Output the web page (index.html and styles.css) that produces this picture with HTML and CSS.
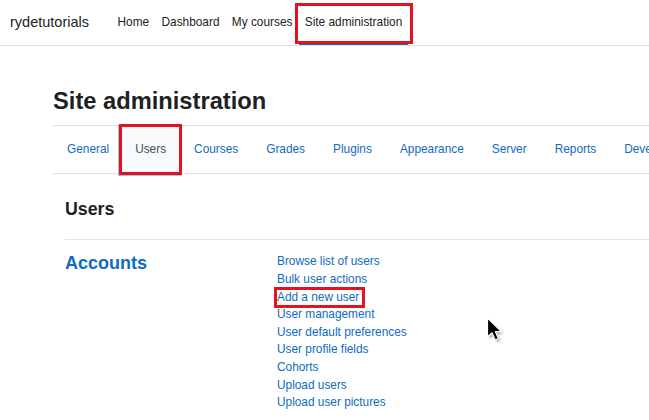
FILE: index.html
```html
<!DOCTYPE html>
<html lang="en">
<head>
<meta charset="utf-8">
<title>Site administration</title>
<link rel="stylesheet" href="styles.css">
</head>
<body>
<header class="navbar">
  <a class="brand" href="#">rydetutorials</a>
  <nav class="primary-nav">
    <a class="nav-link" href="#">Home</a>
    <a class="nav-link" href="#">Dashboard</a>
    <a class="nav-link" href="#">My courses</a>
    <a class="nav-link active marked" href="#">Site administration</a>
  </nav>
</header>

<main class="page">
  <h1 class="page-title">Site administration</h1>
  <nav class="tabs">
    <a class="tab" href="#">General</a>
    <a class="tab active marked" href="#">Users</a>
    <a class="tab" href="#">Courses</a>
    <a class="tab" href="#">Grades</a>
    <a class="tab" href="#">Plugins</a>
    <a class="tab" href="#">Appearance</a>
    <a class="tab" href="#">Server</a>
    <a class="tab" href="#">Reports</a>
    <a class="tab" href="#">Development</a>
  </nav>

  <section class="content">
    <h2 class="section-title">Users</h2>
    <hr class="divider">
    <div class="category">
      <h3 class="category-title"><a href="#">Accounts</a></h3>
      <ul class="links">
        <li><a href="#">Browse list of users</a></li>
        <li><a href="#">Bulk user actions</a></li>
        <li><a class="marked-link" href="#">Add a new user</a></li>
        <li><a href="#">User management</a></li>
        <li><a href="#">User default preferences</a></li>
        <li><a href="#">User profile fields</a></li>
        <li><a href="#">Cohorts</a></li>
        <li><a href="#">Upload users</a></li>
        <li><a href="#">Upload user pictures</a></li>
      </ul>
    </div>
  </section>
</main>

<svg class="cursor" width="20" height="28" viewBox="0 0 20 28" aria-hidden="true">
  <defs>
    <filter id="sh" x="-30%" y="-30%" width="160%" height="160%">
      <feGaussianBlur stdDeviation="0.9"/>
    </filter>
  </defs>
  <path d="M2.5,2.5 L2.5,21 L7,16.8 L10.2,24 L13.4,22.6 L10.3,15.6 L16.3,15.6 Z" fill="#000" opacity="0.35" filter="url(#sh)" transform="translate(1,1.2)"/>
  <path d="M1.5,1 L1.5,20 L6,15.8 L9.2,23 L12.4,21.6 L9.3,14.6 L15.3,14.6 Z" fill="#000" stroke="#fff" stroke-width="1.2" stroke-linejoin="round"/>
</svg>
</body>
</html>
```

FILE: styles.css
```css
* { box-sizing: border-box; }

html, body {
  margin: 0;
  padding: 0;
  height: 100%;
  overflow: hidden;
  background: #ffffff;
}

body {
  font-family: "Liberation Sans", Arial, sans-serif;
  font-size: 11.85px;
  line-height: 17.6px;
  color: #1d2125;
  position: relative;
}

a { text-decoration: none; }

/* ---------- top navbar ---------- */
.navbar {
  height: 46px;
  display: flex;
  align-items: center;
  border-bottom: 1px solid #dee2e6;
  padding-left: 10px;
}

.brand {
  font-size: 14.5px;
  line-height: 17.4px;
  color: #1d2125;
  margin-right: 22.4px;
}

.primary-nav {
  display: flex;
  align-self: stretch;
}

.nav-link {
  display: flex;
  align-items: center;
  padding: 0 6.2px;
  color: #1d2125;
  position: relative;
}

.nav-link.active::before {
  content: "";
  position: absolute;
  left: 0;
  right: 0;
  bottom: 0;
  height: 2px;
  background: #0f6cbf;
}

.nav-link.marked::after {
  content: "";
  position: absolute;
  top: 3px;
  bottom: 1px;
  left: -4px;
  right: -5px;
  border: 3px solid #e2131f;
}

/* ---------- page ---------- */
.page {
  margin-left: 53px;
}

.page-title {
  margin: 41px 0 0 0;
  font-size: 23.7px;
  line-height: 28.4px;
  font-weight: 700;
  color: #1d2125;
}

.tabs {
  margin-top: 9.6px;
  display: flex;
  white-space: nowrap;
  border-top: 1px solid #dee2e6;
  border-bottom: 1px solid #dee2e6;
}

.tab {
  display: block;
  padding: 15px 14px 14px 14px;
  color: #0f6cbf;
  position: relative;
  flex: none;
}

.tab.active {
  background: #f8f9fa;
  color: #495057;
  margin-left: -2px;
}

.tab.marked::after {
  content: "";
  position: absolute;
  top: -2px;
  left: -2px;
  right: -2px;
  bottom: -2px;
  border: 3px solid #e2131f;
  box-shadow: -1px 1px 0 #9fc2e7;
}

/* ---------- content ---------- */
.content {
  padding-left: 12px;
}

.section-title {
  margin: 25.9px 0 0 0;
  font-size: 17.8px;
  line-height: 21.4px;
  font-weight: 700;
  color: #1d2125;
}

.divider {
  margin: 18px 0 0 0;
  border: 0;
  border-top: 1px solid #e3e6e9;
  height: 0;
}

.category {
  display: grid;
  grid-template-columns: 212px 1fr;
  align-items: start;
  margin-top: 13.5px;
}

.category-title {
  margin: 0;
  font-size: 18px;
  line-height: 21.6px;
  font-weight: 700;
}

.category-title a { color: #0f6cbf; }

.links {
  list-style: none;
  margin: 0;
  padding: 0;
}

.links li { line-height: 17.6px; }

.links a { color: #0f6cbf; }

.marked-link {
  display: inline-block;
  position: relative;
}

.marked-link::after {
  content: "";
  position: absolute;
  top: -2px;
  bottom: -2px;
  left: -3px;
  right: -6px;
  border: 3px solid #e2131f;
}

/* ---------- mouse cursor overlay ---------- */
.cursor {
  position: absolute;
  left: 486px;
  top: 317px;
}
```
